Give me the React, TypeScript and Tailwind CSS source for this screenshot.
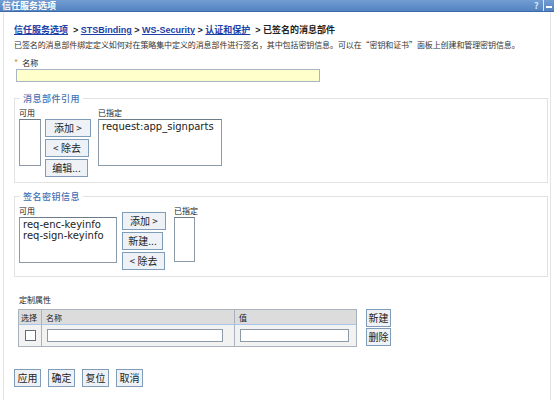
import React from 'react';

const cjk = '"Noto Sans CJK SC", "DejaVu Sans", sans-serif';
const latin = '"DejaVu Sans", "Noto Sans CJK SC", sans-serif';
const crumb = '"Liberation Sans", "Noto Sans CJK SC", sans-serif';

const Btn: React.FC<{ label: string; className?: string }> = ({ label, className = '' }) => (
  <button
    className={`h-[18px] whitespace-nowrap flex items-center justify-center border border-[#7f9db9] bg-[#eef2f7] text-[10px] leading-none text-[#222] ${className}`}
    style={{ fontFamily: cjk }}
  >
    {label}
  </button>
);

const ListBox: React.FC<{ items?: string[]; className: string }> = ({ items = [], className }) => (
  <div className={`border border-[#8c9aa8] border-t-[#6d7c8b] bg-white px-[3px] py-[1px] text-[10px] leading-[11px] text-[#222] whitespace-nowrap overflow-hidden ${className}`} style={{ fontFamily: latin }}>
    {items.map((i) => (
      <div key={i}>{i}</div>
    ))}
  </div>
);

const Legend: React.FC<{ text: string }> = ({ text }) => (
  <div className="absolute -top-[6px] left-[5px] bg-white px-[3px] text-[9px] leading-[12px] text-[#3f72b5] font-medium tracking-[0.5px]">{text}</div>
);

export default function App() {
  return (
    <div className="w-[554px] h-[400px] bg-white overflow-hidden text-[#222]" style={{ fontFamily: cjk }}>
      <div className="h-[12px] flex items-center bg-gradient-to-b from-[#739dd2] to-[#5283c2] border-b border-[#3d6aa8]">
        <div className="flex-1 pl-[2px] text-[9px] leading-none font-bold text-white">信任服务选项</div>
        <div className="w-[9px] text-[9px] leading-none text-[#dbe6f5] font-bold">?</div>
        <div className="w-px h-full bg-[#dce6f3]" />
        <div className="w-[10px] flex justify-center">
          <div className="w-[6px] h-[2px] bg-white mt-[3px]" />
        </div>
      </div>

      <div className="ml-[3px] w-[548px] h-[388px] border-x border-[#e4e4e4] pl-[10px] pr-[2px]">
        <div className="pt-[12px] text-[9px] leading-[12px] font-bold whitespace-nowrap">
          <span className="text-[#1c3fa8] underline">信任服务选项</span>
          <span style={{ fontFamily: crumb }}> &nbsp;&gt; </span>
          <span className="text-[#1c3fa8] underline" style={{ fontFamily: crumb }}>STSBinding</span>
          <span style={{ fontFamily: crumb }}> &gt; </span>
          <span className="text-[#1c3fa8] underline" style={{ fontFamily: crumb }}>WS-Security</span>
          <span style={{ fontFamily: crumb }}> &gt; </span>
          <span className="text-[#1c3fa8] underline">认证和保护</span>
          <span style={{ fontFamily: crumb }}> &nbsp;&gt; </span>
          <span>已签名的消息部件</span>
        </div>
        <div className="mt-[4px] text-[8px] leading-[10px] text-[#333] whitespace-nowrap tracking-[-0.1px]">
          已签名的消息部件绑定定义如何对在策略集中定义的消息部件进行签名，其中包括密钥信息。可以在“密钥和证书”面板上创建和管理密钥信息。
        </div>

        <div className="mt-[8px] flex items-center text-[8px] leading-[10px]">
          <span className="text-[#c79a1a] text-[9px] mr-[4px]">*</span>
          <span>名称</span>
        </div>
        <div className="mt-[1px] ml-[2px] w-[304px] h-[13px] bg-[#ffffcc] border border-[#a8b5c2]" />

        <div className="relative mt-[16px] w-[534px] h-[85px] border border-[#e2e2e2]">
          <Legend text="消息部件引用" />
          <div className="flex pl-[4px] pt-[9px]">
            <div className="flex flex-col">
              <div className="text-[8px] leading-[10px]">可用</div>
              <ListBox className="mt-[1px] w-[22px] h-[47px]" />
            </div>
            <div className="ml-[4px] mt-[11px] flex flex-col gap-[2px] items-start">
              <Btn label="添加 >" className="w-[46px]" />
              <Btn label="< 除去" className="w-[44px]" />
              <Btn label="编辑..." className="w-[43px]" />
            </div>
            <div className="ml-[7px] flex flex-col">
              <div className="text-[8px] leading-[10px]">已指定</div>
              <ListBox items={['request:app_signparts']} className="mt-[1px] w-[124px] h-[47px]" />
            </div>
          </div>
        </div>

        <div className="relative mt-[13px] w-[534px] h-[81px] border border-[#e2e2e2]">
          <Legend text="签名密钥信息" />
          <div className="flex pl-[4px] pt-[9px]">
            <div className="flex flex-col">
              <div className="text-[8px] leading-[10px]">可用</div>
              <ListBox items={['req-enc-keyinfo', 'req-sign-keyinfo']} className="mt-[1px] w-[98px] h-[46px]" />
            </div>
            <div className="ml-[5px] mt-[6px] flex flex-col gap-[2px] items-start">
              <Btn label="添加 >" className="w-[44px]" />
              <Btn label="新建..." className="w-[41px]" />
              <Btn label="< 除去" className="w-[43px]" />
            </div>
            <div className="ml-[8px] flex flex-col">
              <div className="text-[8px] leading-[10px]">已指定</div>
              <ListBox className="mt-[1px] w-[21px] h-[45px]" />
            </div>
          </div>
        </div>

        <div className="mt-[18px] ml-[5px] text-[8px] leading-[10px]">定制属性</div>
        <div className="mt-[4px] ml-[4px] flex items-start">
          <div className="w-[339px] border border-[#a9b3bd]">
            <div className="flex h-[15px] bg-[#dcdcdc] border-b border-[#a9c6e6] text-[8px] leading-[15px]">
              <div className="w-[23px] pl-[2px] border-r border-[#a9b3bd]">选择</div>
              <div className="w-[193px] pl-[4px] border-r border-[#a9b3bd]">名称</div>
              <div className="flex-1 pl-[4px]">值</div>
            </div>
            <div className="flex h-[21px] bg-[#f2f2f2] items-center">
              <div className="w-[23px] h-full flex items-center justify-center border-r border-[#a9b3bd]">
                <div className="w-[11px] h-[11px] border border-[#5f6f80] bg-white" />
              </div>
              <div className="w-[193px] h-full flex items-center pl-[5px] border-r border-[#a9b3bd]">
                <div className="w-[176px] h-[13px] bg-white border border-[#8c9aa8]" />
              </div>
              <div className="flex-1 h-full flex items-center pl-[5px]">
                <div className="w-[109px] h-[13px] bg-white border border-[#8c9aa8]" />
              </div>
            </div>
          </div>
          <div className="ml-[9px] flex flex-col gap-[1px]">
            <Btn label="新建" className="h-[14px] w-[25px] text-[9px]" />
            <Btn label="删除" className="h-[14px] w-[25px] text-[9px]" />
          </div>
        </div>

        <div className="mt-[22px] flex gap-[7px]">
          <Btn label="应用" className="w-[27px] text-[10px]" />
          <Btn label="确定" className="w-[27px] text-[10px]" />
          <Btn label="复位" className="w-[27px] text-[10px]" />
          <Btn label="取消" className="w-[27px] text-[10px]" />
        </div>
      </div>
    </div>
  );
}
